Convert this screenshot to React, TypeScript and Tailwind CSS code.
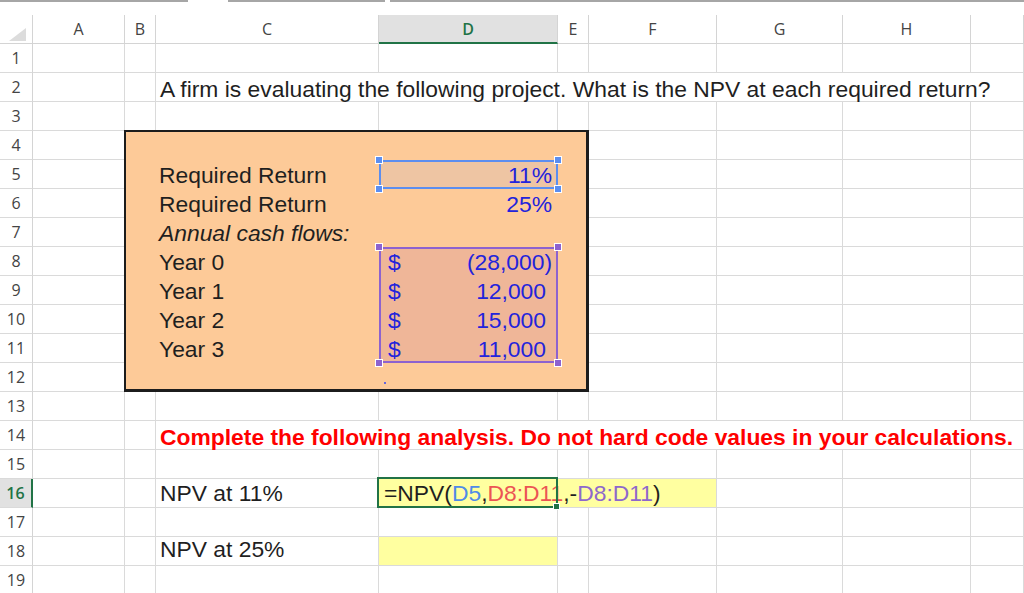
import React from 'react';

const cols = ['A', 'B', 'C', 'D', 'E', 'F', 'G', 'H', ''];
const grid = 'grid grid-cols-[33px_92px_31px_223px_179px_31px_128px_126px_128px_1fr] auto-rows-[29px]';
const cellFont = "font-['Liberation_Sans',Arial,sans-serif] text-[22.85px] leading-none";
const headFont = "font-['Open_Sans','Noto_Sans',sans-serif] text-[16px]";
const line = 'border-r border-b border-[#dadada]';

function RowHead({ n, active }: { n: number; active?: boolean }) {
    return (
        <div
            className={`${headFont} flex items-center justify-center border-b border-[#dadada] ${
                active
                    ? 'bg-[#e1e1e1] text-[#217346] font-semibold border-r-2 border-r-[#217346]'
                    : 'bg-white text-[#444] border-r border-r-[#d4d4d4]'
            }`}
        >
            {n}
        </div>
    );
}

function Cell({ children, className = '' }: { children?: React.ReactNode; className?: string }) {
    return (
        <div className={`${line} ${cellFont} flex items-end whitespace-nowrap text-[#1f1f1f] ${className}`}>
            {children}
        </div>
    );
}

function Handle({ pos, color }: { pos: string; color: string }) {
    return <span className={`absolute w-[8px] h-[8px] border border-white ${color} ${pos}`} />;
}

function Blanks({ count }: { count: number }) {
    return (
        <>
            {Array.from({ length: count }).map((_, i) => (
                <Cell key={i} />
            ))}
        </>
    );
}

function ProjectBox() {
    const blue = 'text-[#2323dc]';
    const rows = [
        { label: 'Year 0', value: '(28,000)', pr: 'pr-[6px]' },
        { label: 'Year 1', value: '12,000', pr: 'pr-[12px]' },
        { label: 'Year 2', value: '15,000', pr: 'pr-[12px]' },
        { label: 'Year 3', value: '11,000', pr: 'pr-[12px]' },
    ];
    return (
        <div className="col-start-3 col-span-4 row-start-5 row-span-9 -ml-px -mt-px bg-[#fdca98] border-l-2 border-t-2 border-r-[3px] border-b-[3px] border-[#1c1c1c] relative z-10">
            <div className={`grid grid-cols-[30px_223px_179px_1fr] grid-rows-[28px_repeat(8,29px)] ${cellFont} text-[#1f1f1f]`}>
                <div className="col-span-4" />

                <div />
                <div className="flex items-end pb-[2px] pl-[3px]">Required Return</div>
                <div className={`relative bg-[#eec5a3] flex items-end justify-end pb-[2px] pr-[6px] ${blue}`}>
                    <span className="absolute inset-0 border-2 border-[#5b8ef0]" />
                    <Handle pos="-left-[4px] -top-[4px]" color="bg-[#5b8ef0]" />
                    <Handle pos="-right-[4px] -top-[4px]" color="bg-[#5b8ef0]" />
                    <Handle pos="-left-[4px] -bottom-[4px]" color="bg-[#5b8ef0]" />
                    <Handle pos="-right-[4px] -bottom-[4px]" color="bg-[#5b8ef0]" />
                    <span className="relative">11%</span>
                </div>
                <div />

                <div />
                <div className="flex items-end pb-[2px] pl-[3px]">Required Return</div>
                <div className={`flex items-end justify-end pb-[2px] pr-[6px] ${blue}`}>25%</div>
                <div />

                <div />
                <div className="flex items-end pb-[2px] pl-[3px] italic">Annual cash flows:</div>
                <div />
                <div />

                <div className="row-span-4" />
                <div className="row-span-4 grid grid-rows-[repeat(4,29px)]">
                    {rows.map(r => (
                        <div key={r.label} className="flex items-end pb-[2px] pl-[3px]">
                            {r.label}
                        </div>
                    ))}
                </div>
                <div className={`row-span-4 relative bg-[#efb698] grid grid-rows-[repeat(4,29px)] ${blue}`}>
                    <span className="absolute inset-0 border-2 border-[#8d62cf]" />
                    <Handle pos="-left-[4px] -top-[4px]" color="bg-[#8d62cf]" />
                    <Handle pos="-right-[4px] -top-[4px]" color="bg-[#8d62cf]" />
                    <Handle pos="-left-[4px] -bottom-[4px]" color="bg-[#8d62cf]" />
                    <Handle pos="-right-[4px] -bottom-[4px]" color="bg-[#8d62cf]" />
                    {rows.map(r => (
                        <div key={r.label} className={`relative flex items-end justify-between pb-[2px] pl-[9px] ${r.pr}`}>
                            <span>$</span>
                            <span>{r.value}</span>
                        </div>
                    ))}
                </div>
                <div className="row-span-4" />

                <div />
                <div />
                <div className="relative">
                    <span className="absolute left-[5px] top-[19px] w-[2px] h-[2px] bg-[#6666dd]" />
                </div>
                <div />
            </div>
        </div>
    );
}

export default function App() {
    const rowsAfter = (n: number) => {
        switch (n) {
            case 2:
                return (
                    <>
                        <Blanks count={2} />
                        <Cell className="col-span-7 pl-[4px]">
                            A firm is evaluating the following project. What is the NPV at each required return?
                        </Cell>
                    </>
                );
            case 14:
                return (
                    <>
                        <Blanks count={2} />
                        <Cell className="col-span-7 pl-[4px] font-bold text-[#ff0000]">
                            Complete the following analysis. Do not hard code values in your calculations.
                        </Cell>
                    </>
                );
            case 16:
                return (
                    <>
                        <Blanks count={2} />
                        <Cell className="pl-[4px] pb-[2px]">NPV at 11%</Cell>
                        <Cell className="col-span-3 relative bg-[#ffffa0] pl-[5px] pb-[2px]">
                            <span className="absolute left-[-2px] top-[-2px] w-[181px] h-[31px] border-2 border-[#217346] z-10" />
                            <span className="absolute left-[174px] top-[24px] w-[7px] h-[7px] bg-[#217346] border border-white z-10" />
                            <span>
                                =NPV(<span className="text-[#4f8be8]">D5</span>,<span className="text-[#ec5454]">D8:D11</span>,-
                                <span className="text-[#8e68cc]">D8:D11</span>)
                            </span>
                        </Cell>
                        <Blanks count={3} />
                    </>
                );
            case 18:
                return (
                    <>
                        <Blanks count={2} />
                        <Cell className="pl-[4px] pb-[4px]">NPV at 25%</Cell>
                        <Cell className="bg-[#ffffa0]" />
                        <Blanks count={5} />
                    </>
                );
            default:
                if (n >= 4 && n <= 12) return <Blanks count={5} />;
                return <Blanks count={9} />;
        }
    };

    return (
        <div className="w-[1024px] h-[593px] overflow-hidden bg-white relative">
            <div className="flex h-[15px] items-start">
                <div className="w-[188px] h-[2px] bg-[#a6a6a6]" />
                <div className="w-[40px]" />
                <div className="w-[157px] h-[2px] bg-[#a6a6a6]" />
                <div className="w-[5px]" />
                <div className="flex-1 h-[2px] bg-[#a6a6a6]" />
            </div>
            <div className={grid}>
                <div className="relative border-r border-b border-[#d4d4d4]">
                    <span className="absolute right-[6px] bottom-[2px] w-0 h-0 border-l-[17px] border-l-transparent border-b-[13px] border-b-[#dcdcdc]" />
                </div>
                {cols.map((c, i) => (
                    <div
                        key={i}
                        className={`${headFont} flex items-center justify-center ${
                            c === 'D'
                                ? 'bg-[#e1e1e1] text-[#217346] font-semibold border-r border-[#d4d4d4] border-b-2 border-b-[#217346]'
                                : 'text-[#444] border-r border-b border-[#d4d4d4]'
                        }`}
                    >
                        {c}
                    </div>
                ))}

                <ProjectBox />

                {Array.from({ length: 19 }).map((_, i) => {
                    const n = i + 1;
                    return (
                        <React.Fragment key={n}>
                            <RowHead n={n} active={n === 16} />
                            {rowsAfter(n)}
                        </React.Fragment>
                    );
                })}
            </div>
        </div>
    );
}
